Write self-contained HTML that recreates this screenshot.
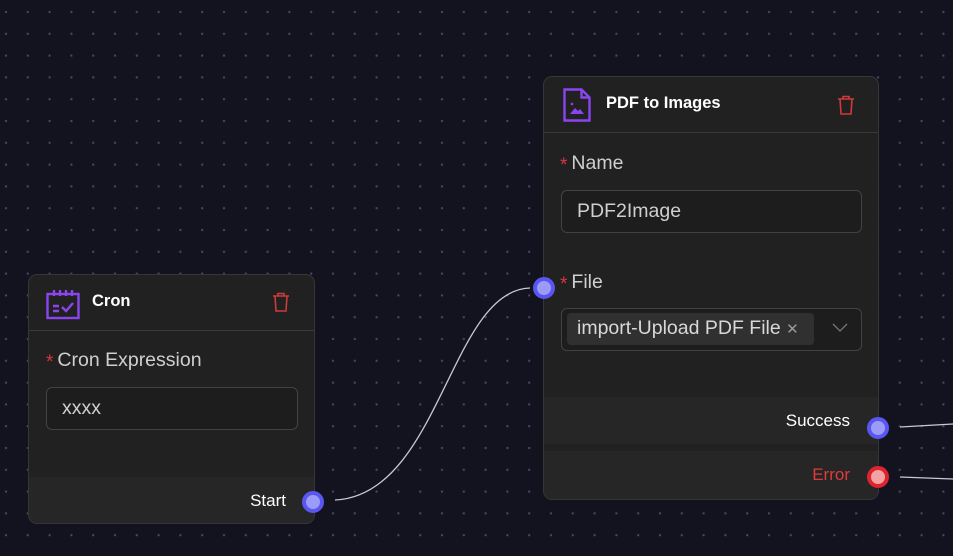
<!DOCTYPE html>
<html><head><style>
*{box-sizing:border-box;margin:0;padding:0}
body{width:953px;height:556px;overflow:hidden;background:#13121f;font-family:"Liberation Sans",sans-serif;position:relative}
.bg{position:absolute;inset:0}
.node{position:absolute;background:#212121;border:1px solid #363636;border-radius:9px;overflow:hidden}
.hdr{position:absolute;left:0;right:0;top:0;border-bottom:1px solid #3a3a3a}
.title{position:absolute;color:#fff;font-weight:bold;font-size:16.5px}
.lbl{position:absolute;color:#cfcfcf;font-size:19.5px}
.lbl b{color:#d9363e;font-weight:normal;font-size:19px;margin-right:4px;position:relative;top:2px}
.inp{position:absolute;border:1px solid #424242;border-radius:6px;color:#cfcfcf;font-size:19.5px;background:#1d1d1d}
.foot{position:absolute;left:0;right:0;background:#262626}
.port{position:absolute;width:22px;height:22px;border-radius:50%;background:#9b9cf7;border:4px solid #5a56f0}
</style></head><body>
<svg class="bg" width="953" height="556">
<defs><pattern id="p" x="-5" y="1" width="21.8" height="21.8" patternUnits="userSpaceOnUse"><rect x="10" y="10" width="2" height="2" fill="#4a4a60"/></pattern></defs>
<rect width="953" height="556" fill="url(#p)"/>
<path d="M335 500 C 440 495 450 290 530 288" stroke="#c8c8d8" stroke-width="1.3" fill="none"/>
<path d="M900 427 L953 424" stroke="#c8c8d8" stroke-width="1.3" fill="none"/>
<path d="M900 477 L953 479" stroke="#c8c8d8" stroke-width="1.3" fill="none"/>
</svg>

<div class="node" style="left:28px;top:274px;width:287px;height:250px">
 <div class="hdr" style="height:56px"></div>
 <svg style="position:absolute;left:17px;top:15px" width="34" height="30" viewBox="0 0 34 30"><g fill="none" stroke="#8b45f0" stroke-width="2.4"><rect x="1.5" y="4" width="31" height="24"/><path d="M8 0v6M14 0v6M20 0v6M26 0v6M7 16h6M7 21h6M16 17l4 4 7-8"/></g></svg>
 <div class="title" style="left:63px;top:17px">Cron</div>
 <svg style="position:absolute;left:243px;top:17px" width="18" height="20" viewBox="0 0 18 20"><g fill="none" stroke="#d03a3a" stroke-width="1.6"><path d="M1 4h16M6 4V1.5h6V4M3 4l1 15h10l1-15"/></g></svg>
 <div class="lbl" style="left:17px;top:74px"><b>*</b>Cron Expression</div>
 <div class="inp" style="left:17px;top:112px;width:252px;height:43px;padding:9px 15px">xxxx</div>
 <div class="foot" style="top:202px;height:48px"><div style="position:absolute;right:28px;top:14px;color:#fff;font-size:17px">Start</div></div>
</div>
<div class="port" style="left:302px;top:491px"></div>

<div class="node" style="left:543px;top:76px;width:336px;height:424px">
 <div class="hdr" style="height:56px"></div>
 <svg style="position:absolute;left:19px;top:11px" width="28" height="34" viewBox="0 0 28 34"><g fill="none" stroke="#8b45f0" stroke-width="2.4"><path d="M1.5 1.5h17l8 8v23h-25z M18.5 1.5v8h8"/></g><path d="M7 26l5-6 3 3 2-2 4 5z" fill="#8b45f0"/><circle cx="9" cy="16" r="1.3" fill="#8b45f0"/></svg>
 <div class="title" style="left:62px;top:17px">PDF to Images</div>
 <svg style="position:absolute;left:293px;top:18px" width="18" height="20" viewBox="0 0 18 20"><g fill="none" stroke="#d03a3a" stroke-width="1.6"><path d="M1 4h16M6 4V1.5h6V4M3 4l1 15h10l1-15"/></g></svg>
 <div class="lbl" style="left:16px;top:75px"><b>*</b>Name</div>
 <div class="inp" style="left:17px;top:113px;width:301px;height:43px;padding:9px 15px">PDF2Image</div>
 <div class="lbl" style="left:16px;top:194px"><b>*</b>File</div>
 <div class="inp" style="left:17px;top:231px;width:301px;height:43px">
  <div style="position:absolute;left:5px;top:4px;width:247px;height:32px;background:#303030;border-radius:4px;padding:4px 10px;color:#d8d8d8;font-size:19.5px;white-space:nowrap">import-Upload PDF File <span style="color:#999;font-size:15px">✕</span></div>
  <svg style="position:absolute;left:270px;top:14px" width="16" height="10"><path d="M1 1l7 7 7-7" stroke="#777" fill="none" stroke-width="1.3"/></svg>
 </div>
 <div class="foot" style="top:320px;height:47px"><div style="position:absolute;right:28px;top:14px;color:#fff;font-size:17px">Success</div></div>
 <div class="foot" style="top:374px;height:50px"><div style="position:absolute;right:28px;top:14px;color:#e03a3a;font-size:17px">Error</div></div>
</div>
<div class="port" style="left:533px;top:277px"></div>
<div class="port" style="left:867px;top:417px"></div>
<div class="port" style="left:867px;top:466px;background:#f2a3a3;border-color:#e0242f"></div>
</body></html>
